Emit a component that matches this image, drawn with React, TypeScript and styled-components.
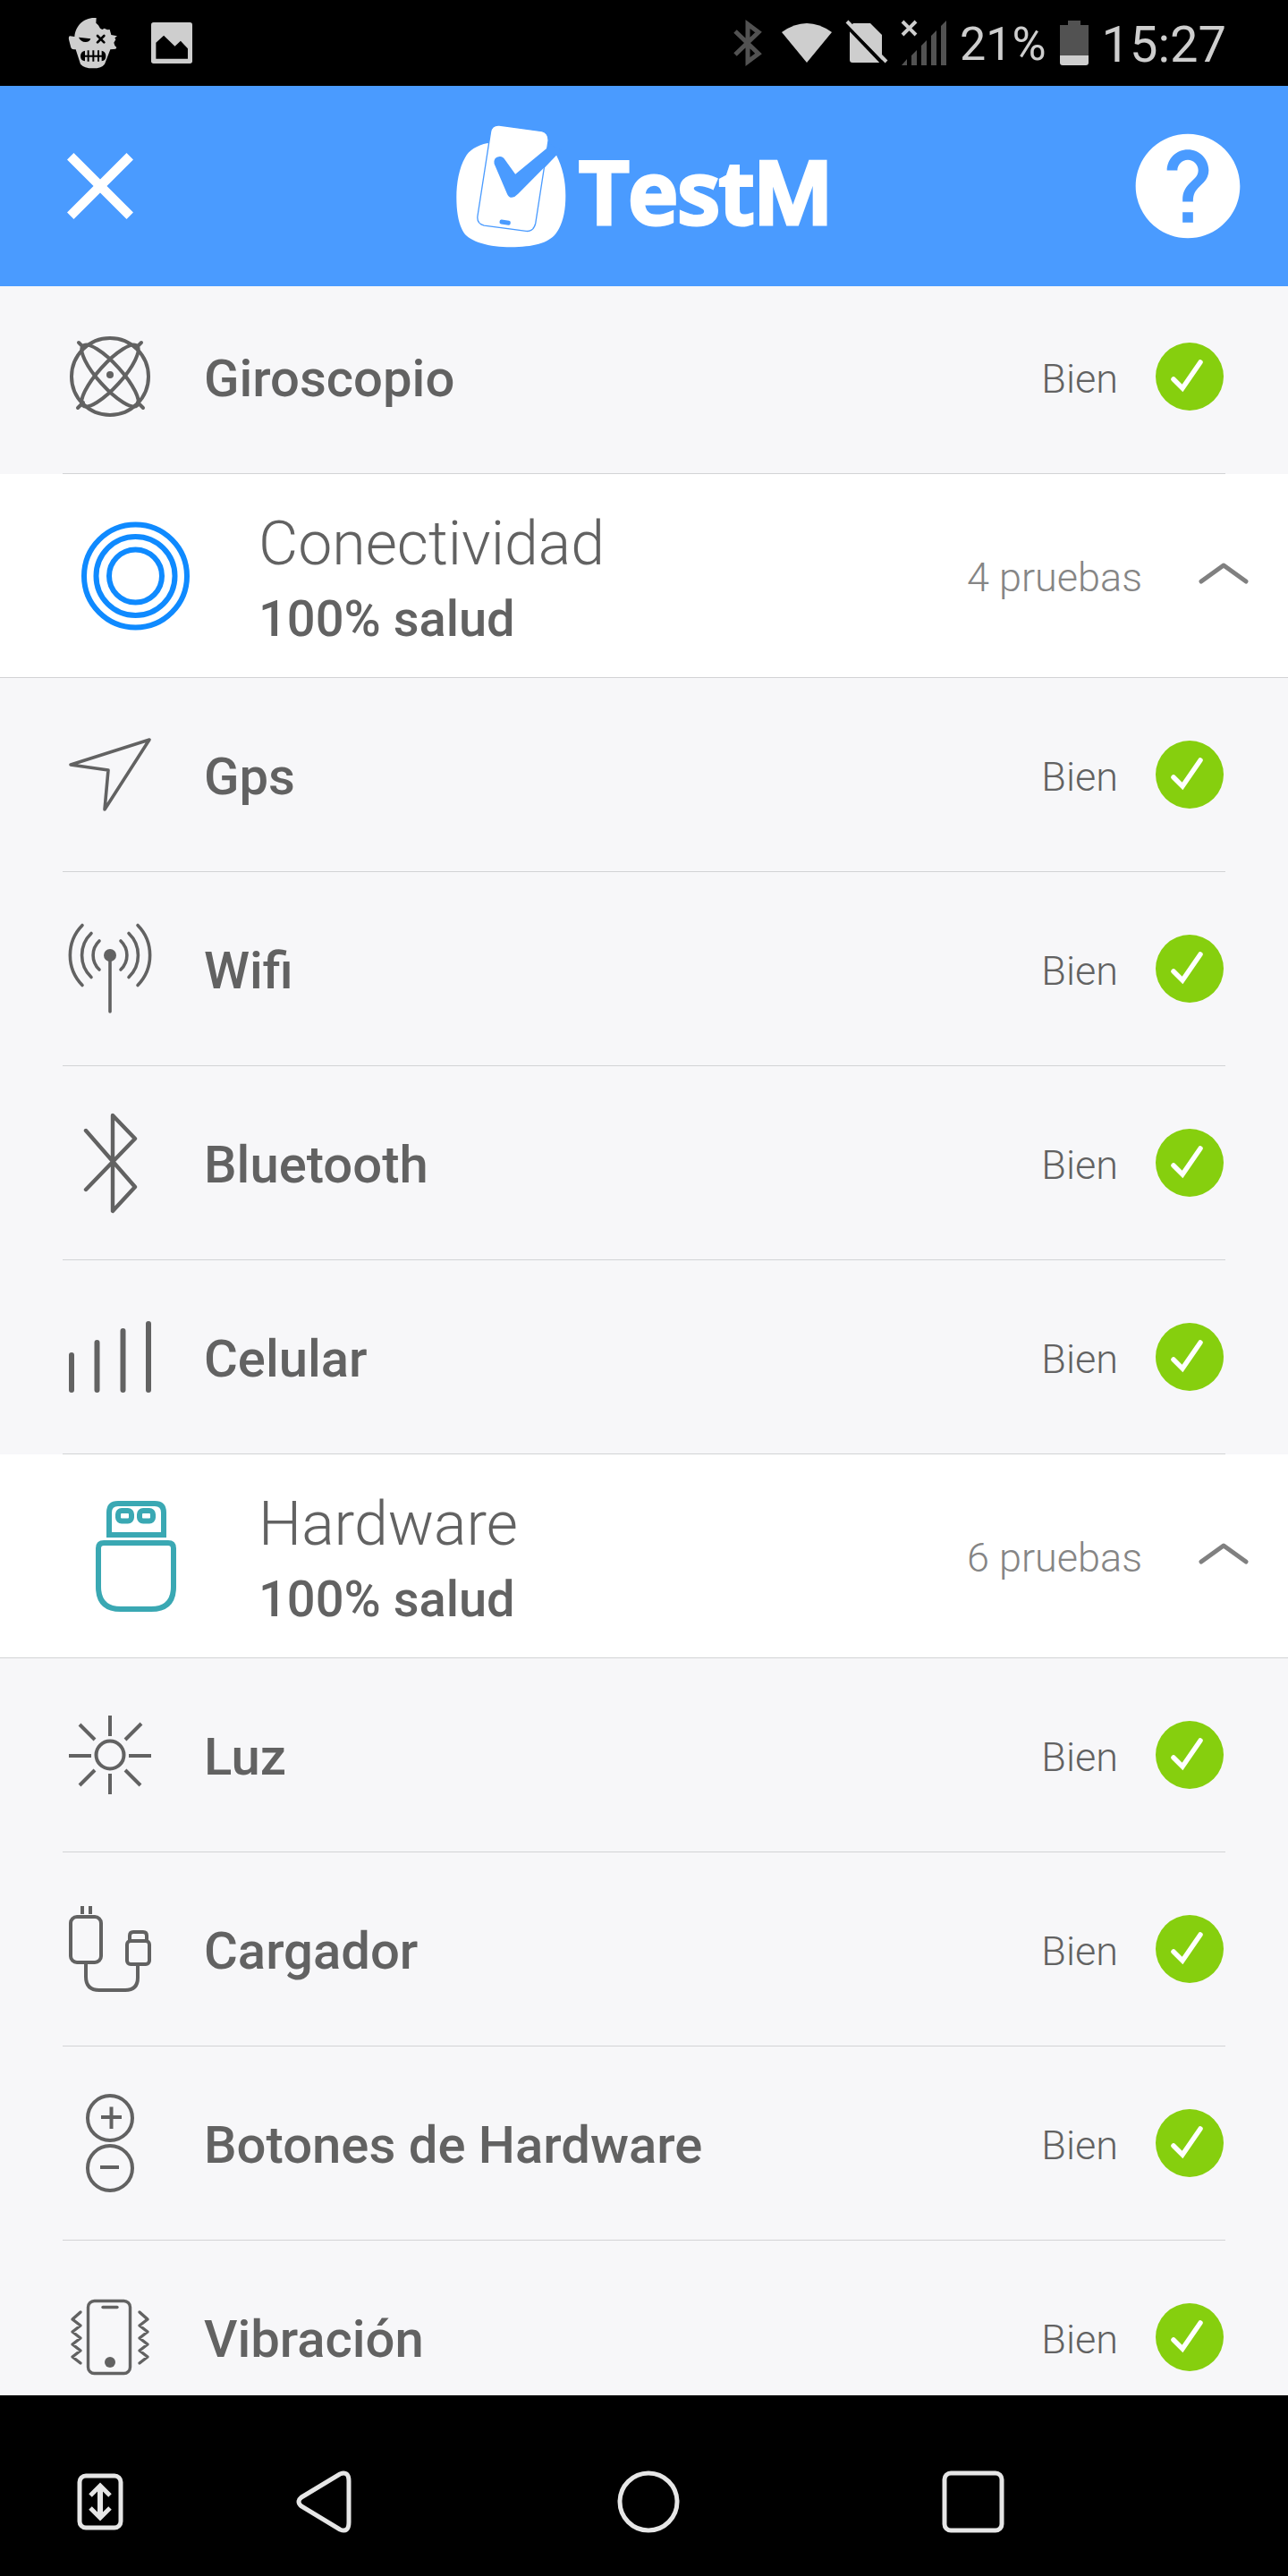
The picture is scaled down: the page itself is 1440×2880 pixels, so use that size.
import React, { useState } from "react";
import styled, { createGlobalStyle } from "styled-components";

const color = {
  header: "#4a9bff",
  row: "#f7f7f9",
  text: "#626262",
  muted: "#858585",
  line: "#d2d3d5",
  ok: "#86cf0e",
  status: "#cecece",
  statusDim: "#525252",
  nav: "#e6e6e6",
};

const GlobalStyle = createGlobalStyle`
  *, *::before, *::after { box-sizing: border-box; }
  body { margin: 0; background: #000; }
  body, button { font-family: Roboto, "Liberation Sans", sans-serif; }
`;

const Screen = styled.div`
  display: flex;
  flex-direction: column;
  height: 100vh;
  overflow: hidden;
`;

const StatusBar = styled.div`
  flex: none;
  display: flex;
  align-items: center;
  justify-content: space-between;
  height: 96px;
  padding: 0 69px 0 76px;
  background: #000;
  color: ${color.status};
`;

const StatusGroup = styled.div<{ $gap: number }>`
  display: flex;
  align-items: center;
  gap: ${(p) => p.$gap}px;
`;

const StatusText = styled.span<{ $size: number }>`
  font-size: ${(p) => p.$size}px;
  line-height: 64px;
  padding-top: 4px;
`;

const AppBar = styled.header`
  flex: none;
  display: grid;
  grid-template-columns: 1fr auto 1fr;
  align-items: center;
  height: 224px;
  padding: 0 42px;
  background: ${color.header};
`;

const IconButton = styled.button<{ $end?: boolean }>`
  justify-self: ${(p) => (p.$end ? "end" : "start")};
  display: flex;
  padding: 0;
  border: 0;
  background: none;
  color: #fff;
  cursor: pointer;
`;

const Brand = styled.h1`
  display: flex;
  align-items: center;
  gap: 14px;
  margin: 0;
  color: #fff;
`;

const Wordmark = styled.span`
  font: 600 96px/112px "Open Sans", "Noto Sans", sans-serif;
  padding-top: 9px;
  -webkit-text-stroke: 5px #fff;
  stroke-linejoin: round;
`;

const Main = styled.main`
  flex: 1 1 0;
  min-height: 0;
  overflow: hidden;
  background: #fff;
`;

const Tests = styled.ul<{ $scrolled?: boolean }>`
  margin: ${(p) => (p.$scrolled ? "-7px" : "0")} 0 0;
  padding: 0 70px;
  list-style: none;
  background: ${color.row};
`;

const TestRow = styled.li`
  display: flex;
  align-items: center;
  height: 217px;
  padding: 0 2px 0 7px;
  border-bottom: 1px solid ${color.line};
`;

const TestName = styled.span`
  flex: 1;
  padding: 4px 0 0 59px;
  color: ${color.text};
  font-size: 58px;
  font-weight: 500;
  line-height: 68px;
`;

const Result = styled.span`
  padding: 5px 42px 0 0;
  color: ${color.text};
  font-size: 45px;
  font-weight: 300;
  line-height: 56px;
`;

const SectionHeader = styled.button`
  display: flex;
  align-items: center;
  width: 100%;
  height: 228px;
  padding: 0 44px 0 90px;
  border: 0;
  border-bottom: 1px solid ${color.line};
  background: #fff;
  color: ${color.text};
  text-align: left;
  cursor: pointer;
`;

const SectionText = styled.span`
  flex: 1;
  display: flex;
  flex-direction: column;
  padding: 8px 0 0 75px;
`;

const SectionTitle = styled.span`
  font-size: 68px;
  font-weight: 300;
  line-height: 88px;
`;

const SectionHealth = styled.span`
  font-size: 56px;
  font-weight: 500;
  line-height: 80px;
`;

const SectionCount = styled.span`
  padding: 5px 63px 0 0;
  color: ${color.muted};
  font-size: 45px;
  font-weight: 300;
  line-height: 56px;
`;

const Chevron = styled.svg<{ $open: boolean }>`
  margin-bottom: 5px;
  transform: ${(p) => (p.$open ? "none" : "rotate(180deg)")};
`;

const Glyph = styled.svg`
  flex: none;
  display: block;
  overflow: visible;
  fill: none;
`;

const NavBar = styled.nav`
  flex: none;
  display: grid;
  grid-template-columns: 180px repeat(3, 1fr) 170px;
  align-items: center;
  height: 202px;
  padding-top: 36px;
  background: #000;
`;

const NavButton = styled.button<{ $side?: boolean }>`
  display: flex;
  justify-content: center;
  padding: 0 0 0 ${(p) => (p.$side ? "44px" : "0")};
  border: 0;
  background: none;
  color: ${color.nav};
  cursor: pointer;
`;

const Line = ({ width = 4, children }: { width?: number; children: React.ReactNode }) => (
  <Glyph
    width="92"
    height="110"
    viewBox="0 0 92 110"
    stroke={color.text}
    strokeWidth={width}
    strokeLinecap="round"
    strokeLinejoin="round"
    aria-hidden="true"
  >
    {children}
  </Glyph>
);

const icons: Record<string, React.ReactNode> = {
  gyroscope: (
    <Line>
      <circle cx="46" cy="55" r="43" />
      <ellipse cx="46" cy="54" rx="45" ry="13" transform="rotate(48 46 54)" />
      <ellipse cx="46" cy="54" rx="45" ry="13" transform="rotate(-48 46 54)" />
      <path d="M11 17 16 22M81 17 76 22M10 90 16 84M83 90 77 84" />
      <circle cx="46" cy="53" r="4" fill={color.text} stroke="none" />
    </Line>
  ),
  gps: (
    <Line width={3.6}>
      <path d="M90 16 2 44 44 50 40 94Z" />
    </Line>
  ),
  wifi: (
    <Line width={3.6}>
      <circle cx="46" cy="40" r="7" fill={color.text} stroke="none" />
      <path d="M46 42V103M15 6.500A48 48 0 0 0 15 73.500M77 6.500A48 48 0 0 1 77 73.500M25 15.500A34 34 0 0 0 25 64.500M67 15.500A34 34 0 0 1 67 64.500M34 24A22 22 0 0 0 34 56M58 24A22 22 0 0 1 58 56" />
    </Line>
  ),
  bluetooth: (
    <Line width={4.4}>
      <path d="M19 19 74 82 49 109V2L74 28 19 85" />
    </Line>
  ),
  cellular: (
    <Line width={6}>
      <path d="M3 53V92M31.500 39V92M60.500 26V92M89 18V92" />
    </Line>
  ),
  light: (
    <Line width={4}>
      <circle cx="46" cy="55" r="15.500" />
      <path
        strokeLinecap="butt"
        d="M46 11V34M46 76V99M0 56H25M67 56H92M12 21 29 38M81 20 63 38M12 89 29 72M80 89 63 72"
      />
    </Line>
  ),
  charger: (
    <Line width={4}>
      <path strokeLinecap="butt" d="M15 7V16M24 7V16" />
      <rect x="2" y="19" width="34" height="51" rx="7" />
      <rect x="65" y="46" width="25" height="26" rx="4" />
      <path d="M68 45V40Q68 36 72 36H83Q87 36 87 40V45" />
      <path strokeLinecap="butt" d="M19 72V86Q19 101 34 101H63Q77 101 77 87V73" />
    </Line>
  ),
  buttons: (
    <Line>
      <circle cx="46" cy="27" r="25" />
      <circle cx="46" cy="83" r="25" />
      <path strokeLinecap="butt" d="M36 26H59M47.500 14.500V39M35 82H56" />
    </Line>
  ),
  vibration: (
    <Line width={3.4}>
      <rect x="21.500" y="14.500" width="47" height="81" rx="7" />
      <path d="M38 21.500H54" />
      <circle cx="46" cy="83" r="6" fill={color.text} stroke="none" />
      <path d="M13 27 4 35 13 42 4 49 13 56 4 63 13 70 4 77 13 84M79 27 88 35 79 42 88 49 79 56 88 63 79 70 88 77 79 84" />
    </Line>
  ),
};

const RingsIcon = () => (
  <Glyph width="124" height="124" viewBox="0 0 124 124" stroke="#0f8aff" strokeWidth="6" aria-hidden="true">
    <circle cx="61.500" cy="62" r="57.500" />
    <circle cx="61.500" cy="62" r="44" />
    <circle cx="61.500" cy="62" r="29.500" />
  </Glyph>
);

const UsbIcon = () => (
  <Glyph width="124" height="124" viewBox="0 0 124 124" stroke="#3aa8b3" strokeWidth="6" aria-hidden="true">
    <path d="M32 38V13Q32 3 42 3H83Q93 3 93 13V38Z" />
    <rect x="42" y="11" width="15" height="11.500" rx="4" />
    <rect x="66" y="11" width="15" height="11.500" rx="4" />
    <path d="M26 47H98Q104 47 104 53V96Q104 121 79 121H45Q20 121 20 96V53Q20 47 26 47Z" />
  </Glyph>
);

const OkIcon = () => (
  <Glyph width="76" height="76" viewBox="0 0 76 76" aria-hidden="true">
    <circle cx="38" cy="38" r="38" fill={color.ok} />
    <path d="M20 41 30 51 50 22" stroke="#fff" strokeWidth="5.500" strokeLinecap="round" />
  </Glyph>
);

const LogoMark = () => (
  <Glyph width="125" height="139" viewBox="24 26 376 416" aria-hidden="true">
    <path
      fill="#fff"
      d="M133 88C95 96 70 112 57 137C37 172 28 222 28 270C28 320 35 360 52 388C72 420 140 438 211 438C285 438 337 425 362 393C385 362 395 320 395 265C395 215 385 170 364 129L320 175Z"
    />
    <path
      fill="#fff"
      stroke={color.header}
      strokeWidth="4"
      d="M143 50Q147 26 172 28L316 48Q338 54 337 80L294 358Q287 387 262 384L121 365Q96 359 99 334Z"
    />
    <path
      fill={color.header}
      d="M155 157Q152 135 173 133Q184 132 192 145L226 193L331 106L345 92L380 112L364 129L236 258Q225 270 214 271Q204 271 199 260Z"
    />
    <rect x="173" y="347" width="37" height="15" rx="6" fill={color.header} transform="rotate(8 191 354)" />
  </Glyph>
);

const SkullIcon = () => (
  <Glyph width="56" height="58" viewBox="30 22 168 174" aria-hidden="true">
    <path
      fill={color.status}
      d="M125 25C85 21 55 50 52 88L37 86Q31 87 33 98L40 125Q42 131 50 131H56L72 180Q84 194 114 194Q143 194 153 180L172 131L190 129L193 124L187 118L184 108L190 98L187 92L195 86L175 82L170 64L162 65L152 60L145 64L138 60L132 50L124 42Z"
    />
    <path fill="#000" d="M66 90 106 95Q103 106 89 106Q72 105 66 90Z" />
    <path stroke="#000" strokeWidth="8" strokeLinecap="round" d="M129 85 151 107M151 85 129 107" />
    <path stroke="#000" strokeWidth="6" d="M80 153H150M98 134V171M115 134V171M132 134V171" />
    <path fill="#000" d="M87 135V170Q72 168 72 153Q72 138 87 135ZM143 135V170Q157 168 157 153Q157 138 143 135Z" />
  </Glyph>
);

const PictureIcon = () => (
  <Glyph width="46" height="46" viewBox="309 39 137 137" aria-hidden="true">
    <rect x="309" y="39" width="137" height="137" rx="8" fill={color.status} />
    <path fill="#000" d="M325 107 351 83 388 119 407 101 431 126V160H325Z" />
  </Glyph>
);

const StatusIcons = () => (
  <>
    <Glyph width="38" height="50" viewBox="0 0 38 50" stroke={color.statusDim} strokeWidth="5" aria-label="Bluetooth">
      <path d="M2 12 28 37 16 46V4L28 13 2 38" />
    </Glyph>
    <Glyph width="58" height="50" viewBox="0 0 58 50" aria-label="Wifi">
      <path fill={color.status} d="M1 13Q29 -7 57 13L29 47Z" />
    </Glyph>
    <Glyph width="47" height="50" viewBox="0 0 47 50" aria-label="Sin SIM">
      <path fill={color.status} d="M8 3H27L40 16V44Q40 47 37 47H7Q4 47 4 44V7Z" />
      <path stroke="#000" strokeWidth="4" d="M-1 4 42 49" />
      <path stroke={color.status} strokeWidth="4" d="M1 1 45 46" />
    </Glyph>
    <Glyph width="50" height="50" viewBox="0 0 50 50" aria-label="Sin señal">
      <path
        fill={color.statusDim}
        d="M0 50 6 43V50ZM11 39 17 33V50H11ZM22 28 28 22V50H22ZM33 17 39 11V50H33ZM44 6 50 0V50H44Z"
      />
      <path stroke={color.status} strokeWidth="4" d="M1 1 16 16M16 1 1 16" />
    </Glyph>
  </>
);

const BatteryIcon = () => (
  <Glyph width="32" height="50" viewBox="0 0 32 50" aria-hidden="true">
    <path fill={color.statusDim} d="M9 0H23V5H32V39H0V5H9Z" />
    <path fill={color.status} d="M0 39H32V47Q32 50 29 50H3Q0 50 0 47Z" />
  </Glyph>
);

type Test = { name: string; icon: string };
type SectionData = { title: string; count: number; icon: React.ReactNode; tests: Test[] };

const sections: SectionData[] = [
  {
    title: "Conectividad",
    count: 4,
    icon: <RingsIcon />,
    tests: [
      { name: "Gps", icon: "gps" },
      { name: "Wifi", icon: "wifi" },
      { name: "Bluetooth", icon: "bluetooth" },
      { name: "Celular", icon: "cellular" },
    ],
  },
  {
    title: "Hardware",
    count: 6,
    icon: <UsbIcon />,
    tests: [
      { name: "Luz", icon: "light" },
      { name: "Cargador", icon: "charger" },
      { name: "Botones de Hardware", icon: "buttons" },
      { name: "Vibración", icon: "vibration" },
    ],
  },
];

const TestItem = ({ name, icon }: Test) => (
  <TestRow>
    {icons[icon]}
    <TestName>{name}</TestName>
    <Result>Bien</Result>
    <OkIcon />
  </TestRow>
);

const Section = ({ title, count, icon, tests }: SectionData) => {
  const [open, setOpen] = useState(true);
  return (
    <section>
      <SectionHeader type="button" aria-expanded={open} onClick={() => setOpen(!open)}>
        {icon}
        <SectionText>
          <SectionTitle>{title}</SectionTitle>
          <SectionHealth>100% salud</SectionHealth>
        </SectionText>
        <SectionCount>{count} pruebas</SectionCount>
        <Chevron $open={open} width="56" height="24" viewBox="0 0 56 24" fill="none" aria-hidden="true">
          <path d="M3 21 28 3 53 21" stroke="#808080" strokeWidth="5" strokeLinecap="round" strokeLinejoin="round" />
        </Chevron>
      </SectionHeader>
      {open && (
        <Tests>
          {tests.map((t) => (
            <TestItem key={t.name} {...t} />
          ))}
        </Tests>
      )}
    </section>
  );
};

export default function App() {
  return (
    <Screen>
      <GlobalStyle />
      <StatusBar>
        <StatusGroup $gap={37}>
          <SkullIcon />
          <PictureIcon />
        </StatusGroup>
        <StatusGroup $gap={15}>
          <StatusIcons />
          <StatusText $size={52}>21%</StatusText>
          <BatteryIcon />
          <StatusText $size={56}>15:27</StatusText>
        </StatusGroup>
      </StatusBar>
      <AppBar>
        <IconButton type="button" aria-label="Cerrar">
          <Glyph width="140" height="140" viewBox="-1.250 -1.250 26.500 26.500" aria-hidden="true">
            <path
              fill="currentColor"
              d="M19 6.410 17.590 5 12 10.590 6.410 5 5 6.410 10.590 12 5 17.590 6.410 19 12 13.410 17.590 19 19 17.590 13.410 12Z"
            />
          </Glyph>
        </IconButton>
        <Brand>
          <LogoMark />
          <Wordmark>TestM</Wordmark>
        </Brand>
        <IconButton type="button" aria-label="Ayuda" $end>
          <Glyph width="140" height="140" viewBox="0 0 24 24" aria-hidden="true">
            <path
              fill="currentColor"
              d="M12 2C6.480 2 2 6.480 2 12s4.480 10 10 10 10-4.480 10-10S17.520 2 12 2zm1 17h-2v-2h2v2zm2.070-7.750l-.9.920C13.450 12.900 13 13.500 13 15h-2v-.5c0-1.100.45-2.100 1.170-2.830l1.240-1.260c.37-.36.59-.86.59-1.410 0-1.100-.9-2-2-2s-2 .9-2 2H8c0-2.210 1.790-4 4-4s4 1.790 4 4c0 .88-.36 1.680-.93 2.250z"
            />
          </Glyph>
        </IconButton>
      </AppBar>
      <Main>
        <Tests $scrolled>
          <TestItem name="Giroscopio" icon="gyroscope" />
        </Tests>
        {sections.map((s) => (
          <Section key={s.title} {...s} />
        ))}
      </Main>
      <NavBar>
        <NavButton type="button" aria-label="Ocultar barra" $side>
          <Glyph width="52" height="64" viewBox="0 0 52 64" stroke="currentColor" strokeWidth="5" aria-hidden="true">
            <rect x="3" y="3" width="46" height="58" rx="7" />
            <path d="M26 16V48" strokeWidth="6" />
            <path d="M15 25 26 14 37 25M15 39 26 50 37 39" />
          </Glyph>
        </NavButton>
        <NavButton type="button" aria-label="Atrás">
          <Glyph width="62" height="70" viewBox="0 0 62 70" stroke="currentColor" strokeWidth="5" aria-hidden="true">
            <path d="M6 30 49 4Q59 0 59 12V58Q59 70 49 66L6 40Q0 35 6 30Z" />
          </Glyph>
        </NavButton>
        <NavButton type="button" aria-label="Inicio">
          <Glyph width="70" height="70" viewBox="0 0 70 70" stroke="currentColor" strokeWidth="5" aria-hidden="true">
            <circle cx="35" cy="35" r="32" />
          </Glyph>
        </NavButton>
        <NavButton type="button" aria-label="Recientes">
          <Glyph width="70" height="70" viewBox="0 0 70 70" stroke="currentColor" strokeWidth="5" aria-hidden="true">
            <rect x="3" y="3" width="64" height="64" rx="7" />
          </Glyph>
        </NavButton>
      </NavBar>
    </Screen>
  );
}
